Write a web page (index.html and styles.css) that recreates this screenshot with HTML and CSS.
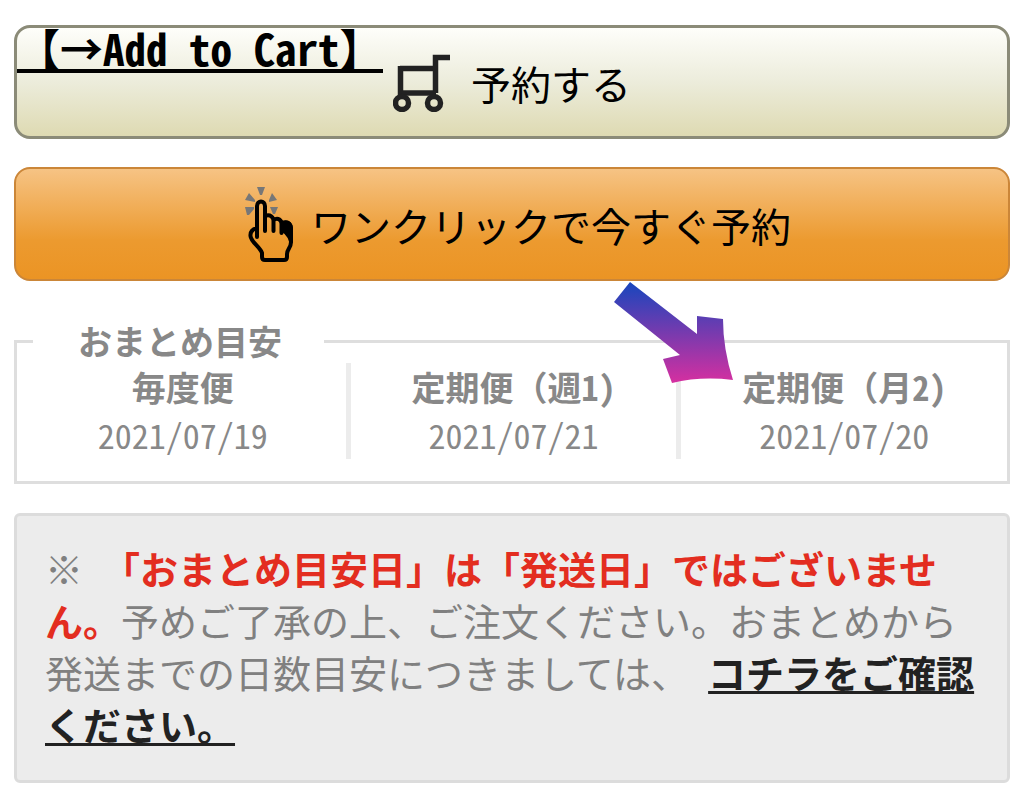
FILE: index.html
```html
<!DOCTYPE html>
<html lang="ja">
<head>
<meta charset="utf-8">
<title>予約</title>
<meta name="viewport" content="width=device-width, initial-scale=1">
<link rel="stylesheet" href="styles.css">
</head>
<body>
<main class="page">
  <div class="cart">
    <button type="button" class="btn btn-cart">
      <svg class="icon-cart" viewBox="0 0 58 58" aria-hidden="true">
        <path d="M7 14.500H43M7.500 12V39H43M42.500 39V3.500H57" fill="none" stroke="#222" stroke-width="5.500"/>
        <circle cx="9" cy="49" r="6.500" fill="none" stroke="#222" stroke-width="5.500"/>
        <circle cx="41" cy="49" r="6.500" fill="none" stroke="#222" stroke-width="5.500"/>
      </svg>
      <span>予約する</span>
    </button>
    <span class="caption">【→Add to Cart】</span>
  </div>

  <button type="button" class="btn btn-click">
    <svg class="icon-hand" viewBox="0 0 50 78" aria-hidden="true">
      <path d="M12 1h8l-3 8h-2zM4 7l6 7v2L0 14zM0 21h9v2l-5 6H2zM27 7l5 7-8 2v-2zM25 21h8l-3 7h-2z" fill="#777"/>
      <path d="M12 51V20C12 14 20 14 20 20V45V30C25 28 29 31 28.500 36V45V34C33 31 37 34 36.500 39V47V38C42 35 46 37 46 44V56C46 62 42 63 42 68V71Q42 74 39 74H20Q17 74 17 71V67C15 61 6 56 5.500 50C5 45 8 43 12 42" fill="none" stroke="#000" stroke-width="4" stroke-linejoin="round" stroke-linecap="round"/>
      <path d="M36 35Q47 32 48 42V56L45 61Q44 50 37 46z"/>
    </svg>
    <span>ワンクリックで今すぐ予約</span>
  </button>

  <fieldset class="estimate">
    <legend class="estimate-title">おまとめ目安</legend>
    <dl class="plans">
      <div class="plan"><dt>毎度便</dt><dd>2021/07/19</dd></div>
      <div class="plan"><dt>定期便（週1)</dt><dd>2021/07/21</dd></div>
      <div class="plan"><dt>定期便（月2)</dt><dd>2021/07/20</dd></div>
    </dl>
    <svg class="arrow" viewBox="0 0 120 102" aria-hidden="true">
      <defs>
        <linearGradient id="fade" x1="0" y1="0" x2="0" y2="1">
          <stop offset="0" stop-color="#1746bd"/>
          <stop offset="1" stop-color="#d62fa0"/>
        </linearGradient>
      </defs>
      <path d="M16 0L83 52V34L109 37Q109 67 119 98Q87 94 58 101L49 77L66 73L0 20Z" fill="url(#fade)"/>
    </svg>
  </fieldset>

  <p class="notice">※<strong class="alert">「おまとめ目安日」は「発送日」ではございません。</strong>予めご了承の上、ご注文ください。おまとめから発送までの日数目安につきましては、<a class="link" href="#guide">コチラをご確認ください。</a></p>
</main>
</body>
</html>
```
FILE: styles.css
```css
* {
  box-sizing: border-box;
}

body {
  margin: 0;
  background: #fff;
  color: #000;
  font-family: "Noto Sans CJK JP", sans-serif;
}

.page {
  padding: 25px 14px 14px;
}

.cart {
  position: relative;
  margin-bottom: 28px;
}

.btn {
  display: flex;
  align-items: center;
  justify-content: center;
  width: 100%;
  min-height: 114px;
  padding: 2px 0 0;
  border-radius: 16px;
  color: #000;
  font: 40px/56px "Noto Sans CJK JP", sans-serif;
  cursor: pointer;
}

.btn-cart {
  gap: 20px;
  border: 3px solid #8b8b78;
  background: linear-gradient(#fefefa, #ececdb 50%, #dedab2);
}

.btn-click {
  gap: 16px;
  padding-left: 12px;
  border: 2px solid #cb8638;
  background: linear-gradient(#f6c384, #ec9a2f 65%, #eb9424);
}

.icon-cart {
  width: 58px;
  height: 58px;
}

.icon-hand {
  width: 50px;
  height: 78px;
}

.caption {
  position: absolute;
  top: 3px;
  left: 3px;
  height: 45px;
  border-bottom: 4px solid #000;
  font: 700 43px/38px "Noto Sans Mono CJK JP", "Noto Sans CJK JP", monospace;
  white-space: nowrap;
  pointer-events: none;
}

.estimate {
  position: relative;
  min-width: 0;
  margin: 40px 0 29px;
  padding: 2px 0 22px 3px;
  border: 3px solid #dedede;
  color: #888;
  font-size: 34px;
}

.estimate-title {
  margin-left: 13px;
  padding: 0 42px 0 45px;
  font-weight: 700;
  line-height: 40px;
}

.plans {
  display: flex;
  margin: 0;
  line-height: 48px;
  text-align: center;
}

.plan {
  box-sizing: content-box;
  flex: 1 1 0;
}

.plan + .plan {
  border-left: 5px solid #ececec;
}

.plan dt {
  font-weight: 700;
  font-family: "Noto Sans Mono CJK JP", "Noto Sans CJK JP", sans-serif;
}

.plan dd {
  margin: 0;
  font-family: "Noto Sans Mono CJK JP", "Noto Sans CJK JP", sans-serif;
}

.arrow {
  position: absolute;
  bottom: 97px;
  right: 273px;
  width: 120px;
  height: 102px;
}

.notice {
  margin: 0;
  padding: 26px 29px 30px 28px;
  border: 3px solid #dcdcdc;
  border-radius: 6px;
  background: #ececec;
  color: #808080;
  font-size: 38px;
  line-height: 52px;
}

.alert {
  margin-left: 19px;
  color: #e32d20;
}

.link {
  margin-left: 19px;
  color: #222;
  font-weight: 700;
  text-decoration-thickness: 3px;
  text-underline-offset: 3px;
  text-decoration-skip-ink: none;
}
```
